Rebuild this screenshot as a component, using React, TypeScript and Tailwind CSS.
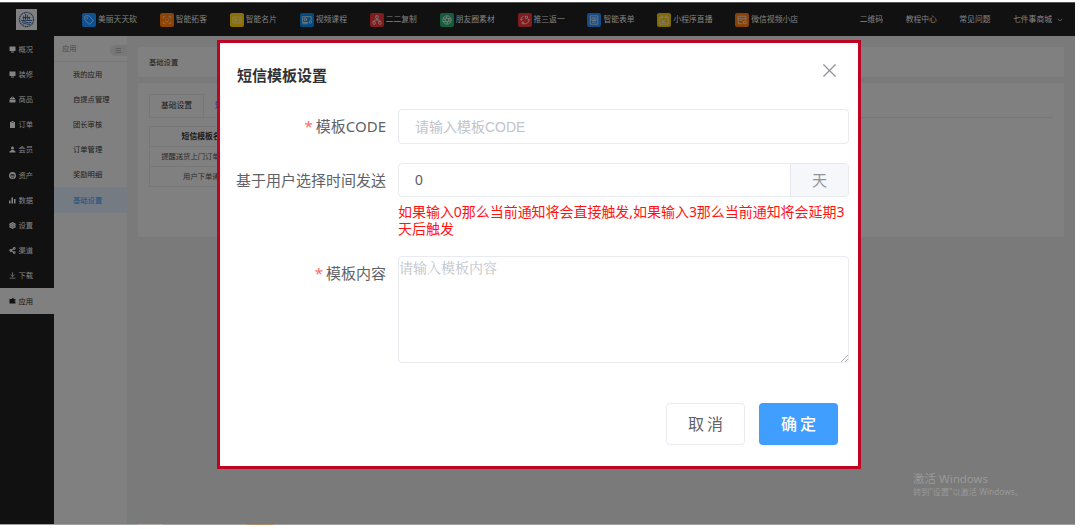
import React from "react";
import {
  Tag, ScanFace, IdCard, Network, Aperture, ChevronDown, Menu, X, Settings, Share2,
} from "lucide-react";

type IconProps = { size?: number; strokeWidth?: number };

const Line = ({ d, size = 10, strokeWidth = 1.8 }: IconProps & { d: string }) => (
  <svg
    viewBox="0 0 24 24"
    width={size}
    height={size}
    fill="none"
    stroke="currentColor"
    strokeWidth={strokeWidth}
    className="shrink-0"
  >
    <path d={d} />
  </svg>
);

const Video = (p: IconProps) => (
  <Line {...p} d="M14 18H1V4h21v9M5 8h6v5H5zM1 21h13M17 17a3 3 0 1 0 6 0a3 3 0 1 0-6 0" />
);
const Rotate = (p: IconProps) => (
  <Line {...p} d="M9 3C4 4 2 8 3 13M3 13l-2-3M3 13l3-3M8 21h7c5-2 7-6 6-11M21 10l-3 3M21 10l2 3M13 3h5v5h-5zM5 17h4v4H5z" />
);
const Form = (p: IconProps) => <Line {...p} d="M3 2h18v20H3zM7 7h10v6H7zM7 17h10M12 7v6" />;
const Live = (p: IconProps) => <Line {...p} d="M2 5h20v17H2zM7 1v7M17 1v7M8 17l7-6M8 12v6h7" />;
const Shop = (p: IconProps) => <Line {...p} d="M3 3h18l1 6H2zM3 9v12h9M21 9v4M7 13h5M15 15h7v6h-7z" />;

const navItems = [
  { label: "美丽天天砍", icon: Tag, bg: "bg-[#10508f]" },
  { label: "智能拓客", icon: ScanFace, bg: "bg-[#8f4302]" },
  { label: "智能名片", icon: IdCard, bg: "bg-[#8c7004]" },
  { label: "视频课程", icon: Video, bg: "bg-[#064b80]" },
  { label: "二二复制", icon: Network, bg: "bg-[#7e1c1e]" },
  { label: "朋友圈素材", icon: Aperture, bg: "bg-[#155c3c]" },
  { label: "推三返一", icon: Rotate, bg: "bg-[#7e1c1e]" },
  { label: "智能表单", icon: Form, bg: "bg-[#154a86]" },
  { label: "小程序直播", icon: Live, bg: "bg-[#806a05]" },
  { label: "微信视频小店", icon: Shop, bg: "bg-[#8a4204]" },
];

const Shape = ({ d }: { d: string }) => (
  <svg viewBox="0 0 14 14" className="size-[7px] shrink-0" fill="currentColor" fillRule="evenodd">
    <path d={d} />
  </svg>
);

const monitor = "M1 1h12v9H1zM4 11h6v2H4z";
const bag = "M4 4a3 3 0 0 1 6 0h2v2H2V4zM1 7h12v6H1zM5.500 4h3a1.500 1.500 0 0 0-3 0z";
const clipboard = "M2 2h3V0h4v2h3v12H2zM5 4h4V3H5z";
const user = "M4 4a3 3 0 1 1 6 0a3 3 0 0 1-6 0zM1 13v-2l4-3h4l4 3v2z";
const coins = "M7 0a7 7 0 1 0 0 14A7 7 0 0 0 7 0zM3 4h8v1.500H3zM2 7h10v1.500H2zM4 10h6v1H4z";
const bars = "M0 7h3v6H0zM5 1h3v12H5zM10 4h3v9h-3z";
const puzzle = "M1 4h4l4-3v3h4v3h-2v2h2v4H1z";

const sideItems = [
  { label: "概况", icon: <Shape d={monitor} /> },
  { label: "装修", icon: <Shape d={monitor} /> },
  { label: "商品", icon: <Shape d={bag} /> },
  { label: "订单", icon: <Shape d={clipboard} /> },
  { label: "会员", icon: <Shape d={user} /> },
  { label: "资产", icon: <Shape d={coins} /> },
  { label: "数据", icon: <Shape d={bars} /> },
  { label: "设置", icon: <Settings size={7} strokeWidth={4} /> },
  { label: "渠道", icon: <Share2 size={7} strokeWidth={3.5} /> },
  { label: "下载", icon: <Line d="M12 1v15M5 9l7 7l7-7M2 21h20" size={7} strokeWidth={2.5} /> },
  { label: "应用", icon: <Shape d={puzzle} />, active: true },
];

const subItems = ["我的应用", "自提点管理", "团长审核", "订单管理", "奖励明细", "基础设置"];

function Logo() {
  return (
    <div className="ml-4 size-[21px] bg-[#808080] p-[2px]">
      <svg viewBox="0 0 18 18" fill="none" stroke="#1b3358">
        <circle cx="9" cy="9" r="7.500" strokeWidth="1.200" strokeDasharray="1.500 .5" />
        <path d="M3 10h12M4 12c3-2 7 2 10 0M5 14c3-2 5 1 8 0M6 9V5M8 9V3M10 9V4M12 9V6M5 7h8" strokeWidth="1" />
      </svg>
    </div>
  );
}

function Header() {
  return (
    <header className="flex h-[34px] shrink-0 items-center border-t border-[#555] bg-[#111] text-[7.800px] text-[#858585]">
      <div className="w-[82px] shrink-0"><Logo /></div>
      <nav className="flex gap-[22.800px]">
        {navItems.map(({ label, icon: Icon, bg }) => (
          <div key={label} className="flex items-center gap-[2px] whitespace-nowrap">
            <span className={`flex size-[14px] items-center justify-center rounded-[2px] text-[#858585] ${bg}`}>
              <Icon size={10} strokeWidth={1.8} />
            </span>
            {label}
          </div>
        ))}
      </nav>
      <div className="mr-[11px] ml-auto flex items-center gap-[22.500px] whitespace-nowrap">
        <span>二维码</span>
        <span>教程中心</span>
        <span>常见问题</span>
        <span className="flex items-center gap-1">七件事商城 <ChevronDown size={8} /></span>
      </div>
    </header>
  );
}

function Sidebar() {
  return (
    <aside className="w-[54px] shrink-0 bg-[#111] pt-[0.500px] text-[7.300px] text-[#858585]">
      {sideItems.map((item) => (
        <div
          key={item.label}
          className={`flex h-[25.200px] items-center gap-[3px] pl-[8.500px] ${item.active ? "bg-[#808080] text-[#111]" : ""}`}
        >
          {item.icon}
          {item.label}
        </div>
      ))}
    </aside>
  );
}

function SubMenu() {
  return (
    <aside className="w-[73px] shrink-0 bg-[#808080] text-[7.300px] text-[#1b1b1b]">
      <div className="flex h-[25.500px] items-center border-b border-[#777] pl-2 text-[#4a4a4a]">
        应用
        <span className="mt-[5px] ml-auto flex h-[11px] w-[17px] items-center justify-center rounded-l-full bg-[#777]">
          <Menu size={7} strokeWidth={2} />
        </span>
      </div>
      {subItems.map((label, i) => (
        <div
          key={label}
          className={`flex h-[25.200px] items-center pl-[19px] ${i === 5 ? "bg-[#747b82] text-[#205080]" : ""}`}
        >
          {label}
        </div>
      ))}
    </aside>
  );
}

function Content() {
  return (
    <main className="flex-1 overflow-hidden bg-[#7a7a7a] pt-[11px] pr-[11px] pl-[11px] text-[7.300px] text-[#2b2b2b]">
      <div className="flex h-[30px] items-center rounded-[1px] bg-[#808080] pl-[11px] text-[#181818]">基础设置</div>
      <div className="mt-[6px] h-[154px] rounded-[1px] bg-[#808080] px-[11px] pt-[11px]">
        <div className="flex h-[24px] border-b border-[#777] text-[7.800px] whitespace-nowrap">
          <span className="flex w-[55px] items-center justify-center border border-b-0 border-[#777] text-[#181818]">基础设置</span>
          <span className="flex items-center pl-[11px] text-[#30307c]">短信设置</span>
        </div>
        <div className="mt-2 w-[111px] border-t border-l border-[#777] text-center whitespace-nowrap">
          <div className="flex h-5 items-center justify-center border-b border-[#777] text-[7.800px] font-bold text-[#181818]">短信模板名称</div>
          <div className="flex h-5 items-center justify-center border-b border-[#777]">提醒送货上门订单发货通知</div>
          <div className="flex h-5 items-center justify-center border-b border-[#777]">用户下单通知</div>
        </div>
      </div>
    </main>
  );
}

const Label = ({ text, required }: { text: string; required?: boolean }) => (
  <label className="flex h-[35px] w-[166px] shrink-0 items-center justify-end text-[15px] whitespace-nowrap text-[#606266]">
    {required && <span className="mr-[3px] text-[#f56c6c]">*</span>}
    {text}
  </label>
);

function Modal() {
  return (
    <div className="absolute top-[40px] left-[217px] flex h-[428.500px] w-[644px] flex-col border-[3px] border-[#bf0322] bg-white">
      <div className="flex h-[66px] shrink-0 items-start justify-between pr-[17px] pl-[17px]">
        <h2 className="mt-[22px] text-[15px] leading-5 font-bold text-[#303133]">短信模板设置</h2>
        <X size={23} strokeWidth={1.2} className="mt-[16px] text-[#909399]" />
      </div>

      <div className="flex gap-[12px]">
        <Label text="模板CODE" required />
        <input
          placeholder="请输入模板CODE"
          className="h-[35px] w-[451px] rounded-[4px] border border-[#e8eaef] px-4 font-['Liberation_Sans','Noto_Sans_CJK_SC',sans-serif] text-[14px] placeholder:text-[#c0c4cc]"
        />
      </div>

      <div className="mt-[19px] flex gap-[12px]">
        <Label text="基于用户选择时间发送" />
        <div className="w-[451px]">
          <div className="flex h-[34px] overflow-hidden rounded-[4px] border border-[#e8eaef]">
            <input
              defaultValue="0"
              className="min-w-0 flex-1 px-4 font-['Liberation_Sans',sans-serif] text-[14px] text-[#606266]"
            />
            <span className="flex w-[58px] items-center justify-center border-l border-[#e8eaef] bg-[#f5f7fa] text-[15px] text-[#909399]">天</span>
          </div>
          <p className="mt-[6px] text-[14px] leading-[17px] tracking-[-0.040px] text-[#ff1414]">
            如果输入0那么当前通知将会直接触发,如果输入3那么当前通知将会延期3天后触发
          </p>
        </div>
      </div>

      <div className="mt-[19px] flex gap-[12px]">
        <Label text="模板内容" required />
        <div className="relative h-[107px] w-[451px]">
          <textarea
            placeholder="请输入模板内容"
            className="h-full w-full resize-none rounded-[4px] border border-[#e8eaef] font-['Noto_Serif_CJK_SC','Noto_Sans_CJK_SC',serif] text-[14px] leading-5 placeholder:text-[#c0c4cc]"
          />
          <svg viewBox="0 0 7 7" className="absolute right-px bottom-px size-[7px]" stroke="#999" strokeWidth=".8">
            <path d="M0 7L7 0M4 7L7 4" />
          </svg>
        </div>
      </div>

      <div className="mt-10 flex justify-end gap-[14px] pr-5 text-[16px]">
        <button className="h-[42px] w-[79px] rounded-[4px] border border-[#e8eaef] pl-[3px] tracking-[3px] text-[#606266]">取消</button>
        <button className="h-[42px] w-[79px] rounded-[4px] bg-[#409eff] pl-[3px] font-medium tracking-[3px] text-white">确定</button>
      </div>
    </div>
  );
}

export default function App() {
  return (
    <div className="h-[529px] w-[1080px] overflow-hidden bg-white pt-[2px] font-['Noto_Sans','Noto_Sans_CJK_SC',sans-serif]">
      <div className="relative flex h-[523px] w-[1075px] flex-col">
        <Header />
        <div className="flex min-h-0 flex-1">
          <Sidebar />
          <SubMenu />
          <Content />
        </div>
        <div className="absolute bottom-[27px] left-[913px] leading-[13px] whitespace-nowrap text-[#999]">
          <div className="text-[11.500px]">激活 Windows</div>
          <div className="text-[8.300px]">转到“设置”以激活 Windows。</div>
        </div>
        <div className="absolute bottom-0 left-0 flex h-px w-full bg-[#a0a0a0]">
          <div className="ml-[137px] h-px w-[26px] bg-[#b5aaa4]" />
          <div className="ml-[84px] h-px w-[26px] bg-[#b08a68]" />
        </div>
        <div className="absolute -top-[2px] left-0">
          <Modal />
        </div>
      </div>
    </div>
  );
}
